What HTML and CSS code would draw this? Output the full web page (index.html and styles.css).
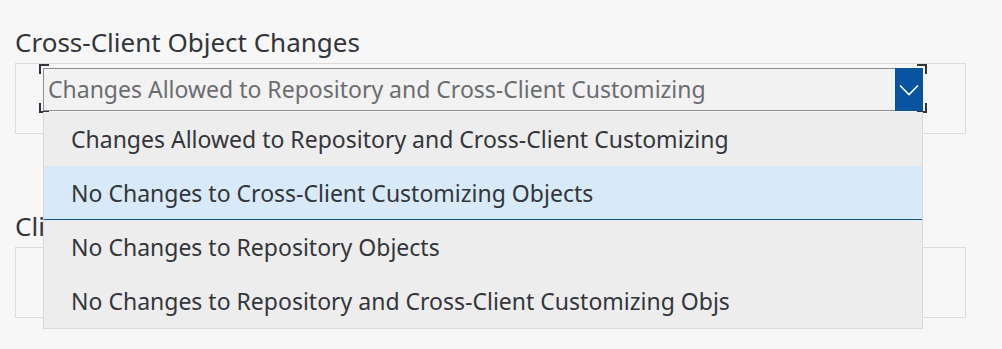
FILE: index.html
```html
<!DOCTYPE html>
<html lang="en">
<head>
    <meta charset="UTF-8" />
    <title>Client Settings</title>
    <link rel="stylesheet" href="styles.css">
</head>
<body>
    <div class="form">
        <div class="field">
            <label class="label">Cross-Client Object Changes</label>
            <div class="cell">
                <div class="select focused">
                    <span class="value">Changes Allowed to Repository and Cross-Client Customizing</span>
                    <span class="arrow">
                        <svg width="20" height="12" viewBox="0 0 20 12"><path d="M1 1.5 L10 10.5 L19 1.5" fill="none" stroke="#fff" stroke-width="1.6"/></svg>
                    </span>
                    <span class="corner tl"></span>
                    <span class="corner tr"></span>
                    <span class="corner bl"></span>
                    <span class="corner br"></span>

                    <ul class="popover">
                        <li>Changes Allowed to Repository and Cross-Client Customizing</li>
                        <li class="selected">No Changes to Cross-Client Customizing Objects</li>
                        <li>No Changes to Repository Objects</li>
                        <li>No Changes to Repository and Cross-Client Customizing Objs</li>
                    </ul>
                </div>
            </div>
        </div>

        <div class="field">
            <label class="label">Client Copy and Comparison Tool Protection</label>
            <div class="cell"></div>
        </div>
    </div>
</body>
</html>
```

FILE: styles.css
```css
html, body {
    height: 100%;
}
body {
    margin: 0;
    background: #f7f7f7;
    font-family: "Noto Sans", "Open Sans", sans-serif;
    color: #32363a;
}
.form {
    min-height: 100%;
    box-sizing: border-box;
    padding: 26px 36px 0 15px;
    display: flex;
    flex-direction: column;
    gap: 76px;
}
.field {
    display: flex;
    flex-direction: column;
}
.label {
    font-size: 26px;
    line-height: 32px;
    height: 37px;
    white-space: nowrap;
}
.cell {
    height: 65px;
    border: 1px solid #dcdcdc;
    padding: 4px 42px 0 27px;
}
.select {
    position: relative;
    display: flex;
    height: 43px;
    box-sizing: border-box;
    border: 1px solid #89919a;
    background: #f2f2f2;
}
.value {
    flex: 1;
    padding-left: 4px;
    font-size: 23px;
    line-height: 40px;
    color: #6a6d70;
    white-space: nowrap;
    overflow: hidden;
}
.arrow {
    width: 28px;
    margin: -1px -1px -1px 0;
    background: #0854a0;
    display: flex;
    align-items: center;
    justify-content: center;
}
.corner {
    position: absolute;
    width: 8px;
    height: 8px;
    border: 0 solid #32363a;
}
.corner.tl { top: -5px; left: -5px; border-top-width: 2px; border-left-width: 2px; }
.corner.tr { top: -5px; right: -5px; border-top-width: 2px; border-right-width: 2px; }
.corner.bl { bottom: -3px; left: -5px; border-bottom-width: 2px; border-left-width: 2px; }
.corner.br { bottom: -3px; right: -5px; border-bottom-width: 2px; border-right-width: 2px; }
.popover {
    position: absolute;
    top: 43px;
    left: -1px;
    right: -1px;
    margin: 0;
    padding: 0;
    list-style: none;
    background: #ededed;
    border: 1px solid #d9d9d9;
    border-top: 0;
    z-index: 2;
}
.popover li {
    height: 54px;
    line-height: 54px;
    padding-left: 27px;
    font-size: 23px;
    color: #32363a;
    white-space: nowrap;
}
.popover li.selected {
    height: 53px;
    background: #d8e9f7;
    border-bottom: 1px solid #0854a0;
}
```
